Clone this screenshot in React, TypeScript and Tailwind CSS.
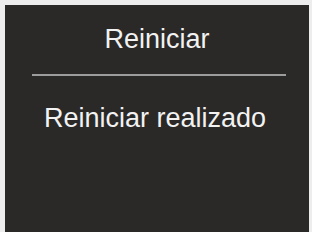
export default function App() {
  return (
    <div className="w-[312px] h-[232px] overflow-hidden bg-[#ededed] pt-[5px] pl-[5px] pr-[3px] font-['Liberation_Sans',Arial,sans-serif]">
      <div className="flex h-full flex-col bg-[#2a2927] text-[#f2f2f2]">
        <div className="mt-[19px] text-center text-[27px] leading-[31px]">Reiniciar</div>
        <div className="ml-[27px] mt-[19px] h-[2px] w-[254px] bg-[#9c9c9c]" />
        <div className="mt-[27px] pl-[39px] text-[27px] leading-[31px]">Reiniciar realizado</div>
      </div>
    </div>
  );
}
